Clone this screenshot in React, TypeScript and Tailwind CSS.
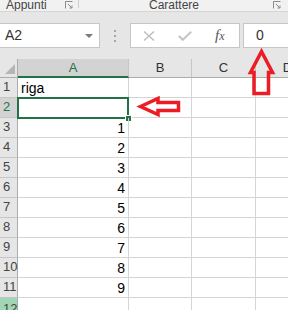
import { FC } from "react";

const rows = [
  { n: 1, text: "riga", align: "left" },
  { n: 2, text: "", align: "left", selected: true },
  { n: 3, text: "1", align: "right" },
  { n: 4, text: "2", align: "right" },
  { n: 5, text: "3", align: "right" },
  { n: 6, text: "4", align: "right" },
  { n: 7, text: "5", align: "right" },
  { n: 8, text: "6", align: "right" },
  { n: 9, text: "7", align: "right" },
  { n: 10, text: "8", align: "right" },
  { n: 11, text: "9", align: "right" },
];

const Launcher: FC = () => (
  <svg width="8" height="8" viewBox="0 0 8 8" className="shrink-0">
    <path d="M0.5 7.5V0.5H7.5" fill="none" stroke="#8a8a8a" strokeWidth="1" />
    <path d="M3 3L7 7M7 4.5V7H4.5" fill="none" stroke="#8a8a8a" strokeWidth="1" />
  </svg>
);

const App: FC = () => {
  return (
    <div className="relative w-[288px] h-[310px] overflow-hidden bg-[#e6e6e6] font-['Liberation_Sans',Arial,sans-serif]">
      {/* ribbon group labels, cut at the top */}
      <div className="flex h-[12px] overflow-hidden border-b border-[#d5d5d5] bg-[#f1f1f1] text-[12px] leading-[12px] text-[#444]">
        <div className="flex w-[78px] items-start">
          <span className="-mt-[1px] pl-[6px]">Appunti</span>
          <span className="ml-auto mr-[5px] mt-[1px]">
            <Launcher />
          </span>
        </div>
        <div className="h-[8px] w-px bg-[#cfcfcf]" />
        <div className="flex flex-1 items-start">
          <span className="-mt-[1px] pl-[70px]">Carattere</span>
          <span className="ml-auto mr-[7px] mt-[1px]">
            <Launcher />
          </span>
        </div>
      </div>

      {/* formula bar */}
      <div className="mt-[11px] flex h-[25px]">
        <div className="flex w-[100px] items-center border-y border-r border-[#c6c6c6] bg-white pl-[5px] text-[14px] text-[#333]">
          A2
          <svg width="8" height="4" viewBox="0 0 8 4" className="ml-auto mr-[6px]">
            <path d="M0 0H8L4 4Z" fill="#7a7a7a" />
          </svg>
        </div>
        <div className="flex w-[30px] flex-col items-center justify-center gap-[3px]">
          <span className="h-[2px] w-[2px] bg-[#a5a5a5]" />
          <span className="h-[2px] w-[2px] bg-[#a5a5a5]" />
          <span className="h-[2px] w-[2px] bg-[#a5a5a5]" />
        </div>
        <div className="flex w-[110px] items-center border border-[#c6c6c6] bg-white pl-[12px]">
          <svg width="12" height="10" viewBox="0 0 12 10">
            <path d="M1 0.5L11 9.5M11 0.5L1 9.5" stroke="#bcbcbc" strokeWidth="1.4" />
          </svg>
          <svg width="14" height="10" viewBox="0 0 14 10" className="ml-[23px]">
            <path d="M0.8 5L4.8 8.8L13.2 0.8" fill="none" stroke="#c4c4c4" strokeWidth="2" />
          </svg>
          <span className="ml-[23px] font-['Liberation_Serif',serif] text-[15px] italic leading-none text-[#555]">
            f<span className="text-[12px]">x</span>
          </span>
        </div>
        <div className="ml-[3px] flex flex-1 items-center border-y border-l border-[#c6c6c6] bg-white pl-[12px] text-[14px] text-[#333]">
          0
        </div>
      </div>

      {/* sheet */}
      <div className="mt-[11px] grid grid-cols-[18px_111px_63px_64px_64px] auto-rows-[20px] grid-rows-[19px] bg-white">
        <div className="relative border-r border-b border-[#ababab] bg-[#e6e6e6]">
          <svg width="18" height="19" viewBox="0 0 18 19" className="absolute inset-0">
            <path d="M15 5V15H5Z" fill="#b5b5b5" />
          </svg>
        </div>
        <div className="flex items-center justify-center border-r border-b-2 border-r-[#c6c6c6] border-b-[#217346] bg-[#d3d3d3] text-[13px] text-[#217346]">
          A
        </div>
        <div className="flex items-center justify-center border-r border-b border-r-[#c6c6c6] border-b-[#ababab] bg-[#e6e6e6] text-[13px] text-[#333]">
          B
        </div>
        <div className="flex items-center justify-center border-r border-b border-r-[#c6c6c6] border-b-[#ababab] bg-[#e6e6e6] text-[13px] text-[#333]">
          C
        </div>
        <div className="flex items-center justify-center border-r border-b border-r-[#c6c6c6] border-b-[#ababab] bg-[#e6e6e6] text-[13px] text-[#333]">
          D
        </div>

        {rows.map((r) => (
          <div key={r.n} className="contents">
            <div
              className={`flex items-end border-b border-r border-b-[#c6c6c6] pb-[2px] pl-[3px] text-[13px] leading-[16px] ${
                r.selected
                  ? "border-r-[#217346] bg-[#d3d3d3] text-[#217346]"
                  : "border-r-[#ababab] bg-[#e6e6e6] text-[#444]"
              }`}
            >
              {r.n}
            </div>
            <div
              className={`relative border-r border-b border-[#d4d4d4] text-[14px] leading-[20px] text-black ${
                r.align === "right" ? "pr-[3px] text-right" : "pl-[3px]"
              }`}
            >
              {r.text}
              {r.selected && (
                <>
                  <div className="absolute -left-[1px] -top-[1px] h-[22px] w-[112px] border-2 border-[#217346]" />
                  <div className="absolute left-[107px] top-[17px] h-[7px] w-[7px] border border-white bg-[#217346]" />
                </>
              )}
            </div>
            <div className="border-r border-b border-[#d4d4d4]" />
            <div className="border-r border-b border-[#d4d4d4]" />
            <div className="border-r border-b border-[#d4d4d4]" />
          </div>
        ))}

        <div className="border-r border-[#ababab] bg-[#a0d6b4] pl-[3px] pt-[3px] text-[13px] leading-[16px] text-[#444]">
          12
        </div>
        <div className="border-r border-[#d4d4d4]" />
        <div className="border-r border-[#d4d4d4]" />
        <div className="border-r border-[#d4d4d4]" />
        <div className="border-r border-[#d4d4d4]" />
      </div>

      {/* red arrows drawn over the screenshot */}
      <svg width="288" height="310" viewBox="0 0 288 310" className="pointer-events-none absolute inset-0">
        <path
          d="M261.5 51.5L250.5 72.5H254V93.5H268.5V72.5H272.5Z"
          fill="none"
          stroke="#ec1c24"
          strokeWidth="3.5"
          strokeLinejoin="miter"
        />
        <path
          d="M140.5 106.5L158 98.5V102.5H178.5V110.5H158V114.5Z"
          fill="none"
          stroke="#ec1c24"
          strokeWidth="3.5"
          strokeLinejoin="miter"
        />
      </svg>
    </div>
  );
};

export default App;
